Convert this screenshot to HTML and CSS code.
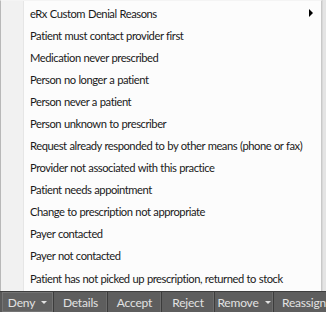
FILE: index.html
```html
<!DOCTYPE html>
<html>
<head>
<meta charset="utf-8">
<link rel="stylesheet" href="styles.css">
</head>
<body>
<div class="screen">
  <div class="menu">
    <ul class="items">
      <li class="item has-sub"><span>eRx Custom Denial Reasons</span><span class="sub-arrow"></span></li>
      <li class="item"><span>Patient must contact provider first</span></li>
      <li class="item"><span>Medication never prescribed</span></li>
      <li class="item"><span>Person no longer a patient</span></li>
      <li class="item"><span>Person never a patient</span></li>
      <li class="item"><span>Person unknown to prescriber</span></li>
      <li class="item"><span>Request already responded to by other means (phone or fax)</span></li>
      <li class="item"><span>Provider not associated with this practice</span></li>
      <li class="item"><span>Patient needs appointment</span></li>
      <li class="item"><span>Change to prescription not appropriate</span></li>
      <li class="item"><span>Payer contacted</span></li>
      <li class="item"><span>Payer not contacted</span></li>
      <li class="item"><span>Patient has not picked up prescription, returned to stock</span></li>
    </ul>
  </div>
  <div class="toolbar">
    <div class="btn btn-active btn-deny">Deny <span class="caret"></span></div>
    <div class="btn btn-md">Details</div>
    <div class="btn btn-md">Accept</div>
    <div class="btn btn-sm">Reject</div>
    <div class="btn btn-wide">Remove <span class="caret"></span></div>
    <div class="btn btn-last">Reassign</div>
  </div>
</div>
</body>
</html>
```

FILE: styles.css
```css
html, body {
  margin: 0;
  padding: 0;
}
body {
  width: 326px;
  height: 312px;
  overflow: hidden;
  background: #e4e4e4;
  font-family: Lato, "Noto Sans", sans-serif;
}
.screen {
  display: flex;
  flex-direction: column;
  width: 326px;
  height: 312px;
}
.menu {
  width: 322px;
  height: 291px;
  box-sizing: border-box;
  background: linear-gradient(to right, #f1f1f1 0, #f1f1f1 22px, #e6e6e6 22px, #e6e6e6 23px, #fcfcfc 23px);
  border-left: 1px solid #b8b8b8;
  border-right: 1px solid #c8c8c8;
  border-top: 1px solid #f4f4f4;
  box-shadow: 1px 0 0 #d8d8d8;
  padding-top: 1px;
}
.items {
  list-style: none;
  margin: 0;
  padding: 0;
}
.item {
  height: 22px;
  display: flex;
  align-items: center;
  padding-left: 29px;
  padding-right: 8px;
  font-size: 11.2px;
  letter-spacing: -0.45px;
  word-spacing: 0.4px;
  color: #1a1a1a;
  white-space: nowrap;
}
.item:last-child {
  height: 24px;
}
.has-sub {
  justify-content: space-between;
}
.sub-arrow {
  width: 0;
  height: 0;
  border-top: 4px solid transparent;
  border-bottom: 4px solid transparent;
  border-left: 4px solid #000;
}
.toolbar {
  flex: 1;
  display: flex;
  align-items: stretch;
  background: #595959;
  border-top: 1px solid #3e3e3e;
  padding-left: 2px;
}
.btn {
  flex: none;
  box-sizing: border-box;
  display: flex;
  align-items: center;
  justify-content: center;
  gap: 6px;
  color: #e2e2e2;
  font-size: 12px;
  letter-spacing: -0.2px;
  border-right: 1px solid #3c3c3c;
  box-shadow: inset -1px 0 0 #6c6c6c;
  background: #5e5e5e;
}
.btn-deny { width: 52px; }
.btn-md { width: 54px; }
.btn-sm { width: 53px; }
.btn-wide { width: 59px; }
.btn-active {
  background: #616161;
  box-shadow: inset 0 0 0 1px #747474;
}
.btn-last {
  flex: 1;
  border-right: none;
  box-shadow: none;
  justify-content: flex-start;
  padding-left: 8px;
  white-space: nowrap;
}
.caret {
  width: 0;
  height: 0;
  border-left: 3px solid transparent;
  border-right: 3px solid transparent;
  border-top: 3px solid #e2e2e2;
}
```
